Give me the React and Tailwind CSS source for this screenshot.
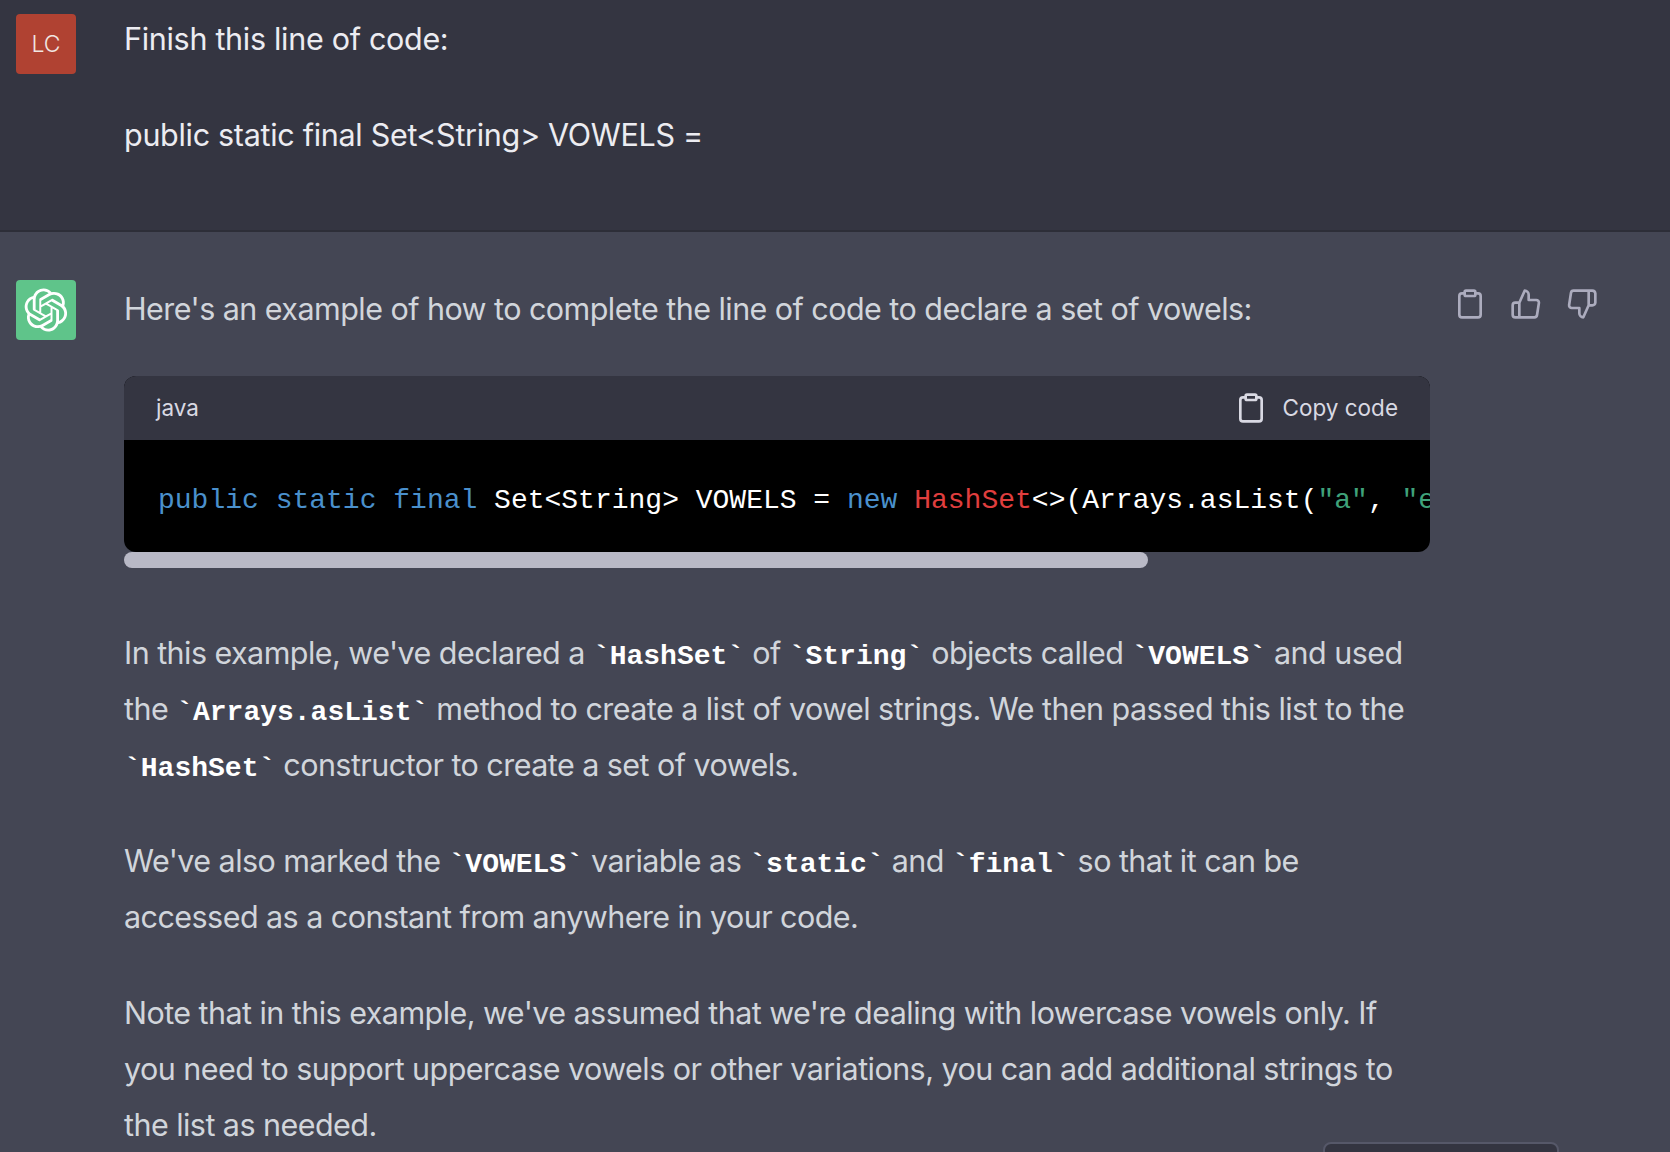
const body = "font-['Inter','Noto_Sans',sans-serif] text-[30.5px] leading-[56px]";
const kw = "text-[#4a90cc]";
const str = "text-[#3fa27a]";

function Code({ children }) {
  return (
    <code className="font-['Liberation_Mono','DejaVu_Sans_Mono',monospace] text-[28px] leading-none font-bold tracking-normal text-white">
      `{children}`
    </code>
  );
}

function Icon({ children }) {
  return (
    <svg viewBox="0 0 24 24" fill="none" stroke="currentColor" strokeWidth="2" strokeLinecap="round" strokeLinejoin="round" className="h-8 w-8">
      {children}
    </svg>
  );
}

function ClipboardIcon() {
  return (
    <Icon>
      <path d="M16 4h2a2 2 0 0 1 2 2v14a2 2 0 0 1-2 2H6a2 2 0 0 1-2-2V6a2 2 0 0 1 2-2h2" />
      <rect x="8" y="2" width="8" height="4" rx="1" ry="1" />
    </Icon>
  );
}

function OpenAILogo() {
  return (
    <svg viewBox="0 0 41 41" fill="none" className="h-11 w-11">
      <path
        fill="currentColor"
        d="M37.5324 16.8707C37.9808 15.5241 38.1363 14.0974 37.9886 12.6859C37.8409 11.2744 37.3934 9.91076 36.676 8.68622C35.6126 6.83404 33.9882 5.3676 32.0373 4.4985C30.0864 3.62941 27.9098 3.40259 25.8215 3.85078C24.8796 2.7893 23.7219 1.94125 22.4257 1.36341C21.1295 0.785575 19.7249 0.491269 18.3058 0.500197C16.1708 0.495044 14.0893 1.16803 12.3614 2.42214C10.6335 3.67624 9.34853 5.44666 8.6917 7.47815C7.30085 7.76286 5.98686 8.3414 4.8377 9.17505C3.68854 10.0087 2.73073 11.0782 2.02839 12.312C0.956464 14.1591 0.498905 16.2988 0.721698 18.4228C0.944492 20.5467 1.83612 22.5449 3.268 24.1293C2.81966 25.4759 2.66413 26.9026 2.81182 28.3141C2.95951 29.7256 3.40701 31.0892 4.12437 32.3138C5.18791 34.1659 6.8123 35.6322 8.76321 36.5013C10.7141 37.3704 12.8907 37.5973 14.9789 37.1492C15.9208 38.2107 17.0786 39.0587 18.3747 39.6366C19.6709 40.2144 21.0755 40.5087 22.4946 40.4998C24.6307 40.5054 26.7133 39.8321 28.4418 38.5772C30.1704 37.3223 31.4556 35.5506 32.1119 33.5179C33.5027 33.2332 34.8167 32.6547 35.9659 31.821C37.115 30.9874 38.0728 29.9178 38.7752 28.684C39.8458 26.8371 40.3023 24.6979 40.0789 22.5748C39.8556 20.4517 38.9639 18.4544 37.5324 16.8707ZM22.4978 37.8849C20.7443 37.8874 19.0459 37.2733 17.6994 36.1501C17.7601 36.117 17.8666 36.0586 17.936 36.0161L25.9004 31.4156C26.1003 31.3019 26.2663 31.137 26.3813 30.9378C26.4964 30.7386 26.5563 30.5124 26.5549 30.2825V19.0542L29.9213 20.998C29.9389 21.0068 29.9541 21.0198 29.9656 21.0359C29.977 21.052 29.9842 21.0707 29.9867 21.0902V30.3889C29.9842 32.375 29.1946 34.2791 27.7909 35.6841C26.3872 37.0892 24.4838 37.8806 22.4978 37.8849ZM6.39227 31.0064C5.51397 29.4888 5.19742 27.7107 5.49804 25.9832C5.55718 26.0187 5.66048 26.0818 5.73461 26.1244L13.699 30.7248C13.8975 30.8408 14.1233 30.902 14.3532 30.902C14.583 30.902 14.8088 30.8408 15.0073 30.7248L24.731 25.1103V28.9979C24.7321 29.0177 24.7283 29.0376 24.7199 29.0556C24.7115 29.0736 24.6988 29.0893 24.6829 29.1012L16.6317 33.7497C14.9096 34.7416 12.8643 35.0097 10.9447 34.4954C9.02506 33.9811 7.38785 32.7263 6.39227 31.0064ZM4.29707 13.6194C5.17156 12.0998 6.55279 10.9364 8.19885 10.3327C8.19885 10.4013 8.19491 10.5228 8.19491 10.6071V19.808C8.19351 20.0378 8.25334 20.2638 8.36823 20.4629C8.48312 20.6619 8.64893 20.8267 8.84863 20.9404L18.5723 26.5542L15.206 28.4979C15.1894 28.5089 15.1703 28.5155 15.1505 28.5173C15.1307 28.5191 15.1107 28.516 15.0924 28.5082L7.04046 23.8557C5.32135 22.8601 4.06716 21.2235 3.55289 19.3046C3.03862 17.3858 3.30624 15.3413 4.29707 13.6194ZM31.955 20.0556L22.2312 14.4411L25.5976 12.4981C25.6142 12.4872 25.6333 12.4805 25.6531 12.4787C25.6729 12.4769 25.6928 12.4801 25.7111 12.4879L33.7631 17.1364C34.9967 17.849 36.0017 18.8982 36.6606 20.1613C37.3194 21.4244 37.6047 22.849 37.4832 24.2684C37.3617 25.6878 36.8382 27.0432 35.9743 28.1759C35.1103 29.3086 33.9415 30.1717 32.6047 30.6641C32.6047 30.5947 32.6047 30.4733 32.6047 30.3889V21.188C32.6066 20.9586 32.5474 20.7328 32.4332 20.5338C32.319 20.3348 32.154 20.1698 31.955 20.0556ZM35.3055 15.0128C35.2464 14.9765 35.1431 14.9142 35.069 14.8717L27.1045 10.2712C26.906 10.1554 26.6803 10.0943 26.4504 10.0943C26.2206 10.0943 25.9948 10.1554 25.7963 10.2712L16.0726 15.8858V11.9982C16.0715 11.9783 16.0753 11.9585 16.0837 11.9405C16.0921 11.9225 16.1048 11.9068 16.1207 11.8949L24.1719 7.25025C25.4053 6.53903 26.8158 6.19376 28.2383 6.25482C29.6608 6.31589 31.0364 6.78077 32.2044 7.59508C33.3723 8.40939 34.2842 9.53945 34.8334 10.8531C35.3826 12.1667 35.5464 13.6095 35.3055 15.0128ZM14.2424 21.9419L10.8752 19.9981C10.8576 19.9893 10.8423 19.9763 10.8309 19.9602C10.8195 19.9441 10.8122 19.9254 10.8098 19.9058V10.6071C10.8107 9.18295 11.2173 7.78848 11.9819 6.58696C12.7466 5.38544 13.8377 4.42659 15.1275 3.82264C16.4173 3.21869 17.8524 2.99464 19.2649 3.1767C20.6775 3.35876 22.0089 3.93941 23.1034 4.85067C23.0427 4.88379 22.937 4.94215 22.8668 4.98473L14.9024 9.58517C14.7025 9.69878 14.5366 9.86356 14.4215 10.0626C14.3065 10.2616 14.2466 10.4877 14.2479 10.7175L14.2424 21.9419ZM16.071 17.9991L20.4018 15.4978L24.7325 17.9975V22.9985L20.4018 25.4983L16.071 22.9985V17.9991Z"
      />
    </svg>
  );
}

function CodeBlock() {
  return (
    <div className="mt-[39px] w-[1306px]">
      <div className="overflow-hidden rounded-xl bg-black">
        <div className="flex h-16 items-center justify-between bg-[#343541] px-8 font-['Inter',sans-serif] text-[22.5px] tracking-normal text-[#d9d9e3]">
          <span>java</span>
          <span className="flex items-center gap-4">
            <ClipboardIcon />
            Copy code
          </span>
        </div>
        <pre className="h-28 overflow-hidden pl-[34px] pt-[43px] font-['Liberation_Mono',monospace] text-[28px] leading-9 tracking-normal text-white">
          <span className={kw}>public</span> <span className={kw}>static</span> <span className={kw}>final</span> Set&lt;String&gt; VOWELS ={" "}
          <span className={kw}>new</span> <span className="text-[#e03e3e]">HashSet</span>&lt;&gt;(Arrays.asList(
          <span className={str}>"a"</span>, <span className={str}>"e"</span>
        </pre>
      </div>
      <div className="h-4 w-[1024px] rounded-full bg-[#b9b9c6]" />
    </div>
  );
}

export default function App() {
  return (
    <div className="relative h-[1152px] w-[1670px] overflow-hidden bg-[#444654]">
      <div className="flex h-[232px] gap-12 border-b-2 border-[#2d2e38] bg-[#343541] pl-4 pt-[14px]">
        <div className="flex h-[60px] w-[60px] items-center justify-center rounded bg-[#b04232] font-['Inter',sans-serif] text-[23px] font-light text-[#f0e6e2]">
          LC
        </div>
        <div className={`${body} -mt-[3px] tracking-[-0.3px] text-[#ececf1]`}>
          <p>Finish this line of code:</p>
          <p className="mt-10">public static final Set&lt;String&gt; VOWELS =</p>
        </div>
      </div>

      <div className="flex gap-12 pl-4 pt-[48px]">
        <div className="flex h-[60px] w-[60px] shrink-0 items-center justify-center rounded bg-[#5fc48a] text-white">
          <OpenAILogo />
        </div>
        <div className={`${body} mt-px w-[1306px] shrink-0 whitespace-nowrap tracking-[-0.55px] text-[#d1d5db]`}>
          <p>Here's an example of how to complete the line of code to declare a set of vowels:</p>
          <CodeBlock />
          <p className="mt-[57px]">
            In this example, we've declared a <Code>HashSet</Code> of <Code>String</Code> objects called{" "}
            <Code>VOWELS</Code> and used
            <br />
            the <Code>Arrays.asList</Code> method to create a list of vowel strings. We then passed this list to the
            <br />
            <Code>HashSet</Code> constructor to create a set of vowels.
          </p>
          <p className="mt-10">
            We've also marked the <Code>VOWELS</Code> variable as <Code>static</Code> and <Code>final</Code> so that it can be
            <br />
            accessed as a constant from anywhere in your code.
          </p>
          <p className="mt-10">
            Note that in this example, we've assumed that we're dealing with lowercase vowels only. If
            <br />
            you need to support uppercase vowels or other variations, you can add additional strings to
            <br />
            the list as needed.
          </p>
        </div>
        <div className="-ml-6 mt-[8px] flex h-8 gap-6 text-[#acacbe]">
          <ClipboardIcon />
          <Icon>
            <path d="M14 9V5a3 3 0 0 0-3-3l-4 9v11h11.28a2 2 0 0 0 2-1.7l1.38-9a2 2 0 0 0-2-2.3zM7 22H4a2 2 0 0 1-2-2v-7a2 2 0 0 1 2-2h3" />
          </Icon>
          <Icon>
            <path d="M10 15v4a3 3 0 0 0 3 3l4-9V2H5.72a2 2 0 0 0-2 1.7l-1.38 9a2 2 0 0 0 2 2.3zm7-13h2.67A2.31 2.31 0 0 1 22 4v7a2.31 2.31 0 0 1-2.33 2H17" />
          </Icon>
        </div>
      </div>

      <div className="absolute left-[1323px] top-[1142px] h-12 w-[236px] rounded-lg border-2 border-[#565869] bg-[#343541]" />
    </div>
  );
}
